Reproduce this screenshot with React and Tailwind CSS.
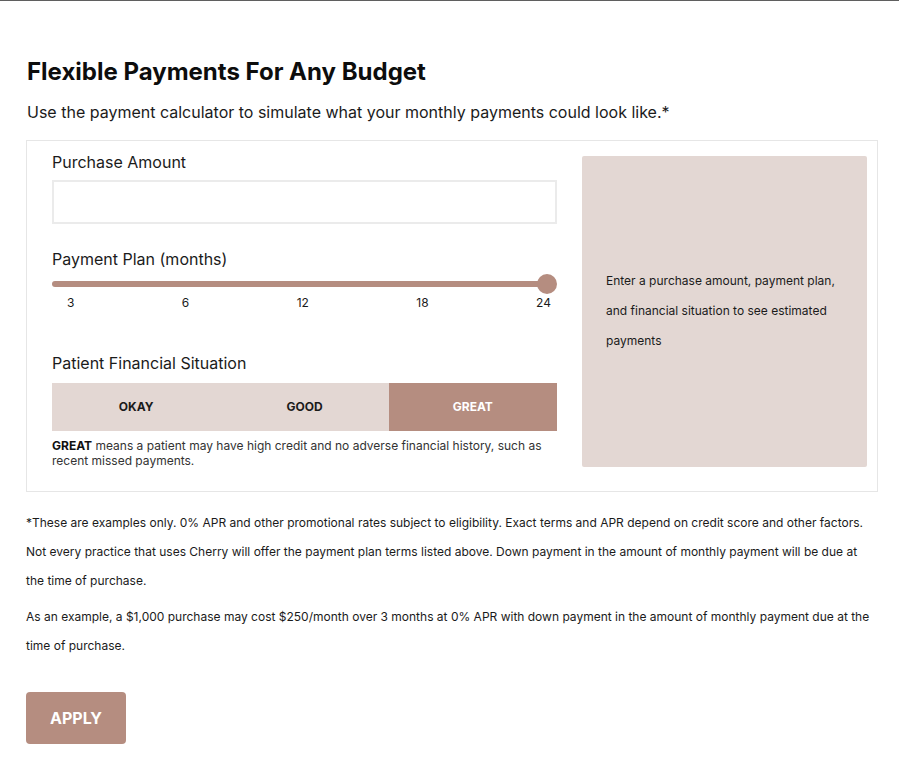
import { useState } from 'react';

const months = [3, 6, 12, 18, 24];
const situations = ['OKAY', 'GOOD', 'GREAT'];

export default function App() {
  const [situation, setSituation] = useState('GREAT');

  return (
    <div className="min-h-[780px] bg-white border-t border-[#5f5f5f] font-['Inter',sans-serif] text-[#1b1b1b]">
      <div className="ml-[26px] w-[852px] pt-[58px] pb-[36px]">
        {/* Header */}
        <h1 className="text-[24px] leading-[26px] font-bold text-[#0d0d0d] ml-px">
          Flexible Payments For Any Budget
        </h1>
        <p className="mt-[15px] text-[16px] leading-[24px] ml-px">
          Use the payment calculator to simulate what your monthly payments could look like.*
        </p>

        {/* Calculator card */}
        <div className="mt-[16px] border border-[#e6e6e6] flex pl-[25px] pr-[10px] pt-[15px] pb-[23px]">
          <div className="w-[505px]">
            <label className="block text-[16px] leading-[20px] -mt-[4px]">Purchase Amount</label>
            <input
              type="text"
              className="mt-[8px] block w-full h-[44px] border-2 border-[#ebebeb] outline-none px-3 text-[16px]"
            />

            <p className="mt-[25px] text-[16px] leading-[20px]">Payment Plan (months)</p>
            <div className="mt-[5px] flex items-center h-[20px]">
              <div className="w-[498px] h-[6px] rounded-full bg-[#b58d80]" />
              <div className="-ml-[10px] w-[20px] h-[20px] rounded-full bg-[#b58d80]" />
            </div>
            <div className="flex justify-between pl-[15px] pr-[6px] text-[12px] leading-[14px] mt-[2px]">
              {months.map((m) => (
                <span key={m}>{m}</span>
              ))}
            </div>

            <p className="mt-[43px] text-[16px] leading-[20px]">Patient Financial Situation</p>
            <div className="mt-[10px] grid grid-cols-3 h-[48px]">
              {situations.map((s) => (
                <button
                  key={s}
                  onClick={() => setSituation(s)}
                  className={`text-[12px] font-bold ${
                    s === situation ? 'bg-[#b58d80] text-white' : 'bg-[#e3d7d3] text-[#1b1b1b]'
                  }`}
                >
                  {s}
                </button>
              ))}
            </div>
            <p className="mt-[7px] text-[12px] leading-[15px] text-[#333]">
              <span className="font-bold text-[#111]">GREAT</span> means a patient may have high credit and no adverse financial history, such as recent missed payments.
            </p>
          </div>

          <div className="ml-[25px] w-[285px] h-[311px] bg-[#e3d7d3] rounded-[2px] flex items-center px-[24px]">
            <p className="text-[12px] leading-[30px] text-[#1b1b1b] -mt-[2px]">
              Enter a purchase amount, payment plan, and financial situation to see estimated payments
            </p>
          </div>
        </div>

        {/* Footnotes */}
        <div className="mt-[16px] text-[12px] leading-[29px] text-[#1b1b1b]">
          <p>
            *These are examples only. 0% APR and other promotional rates subject to eligibility. Exact terms and APR depend on credit score and other factors. Not every practice that uses Cherry will offer the payment plan terms listed above. Down payment in the amount of monthly payment will be due at the time of purchase.
          </p>
          <p className="mt-[7px]">
            As an example, a $1,000 purchase may cost $250/month over 3 months at 0% APR with down payment in the amount of monthly payment due at the time of purchase.
          </p>
        </div>

        <button className="mt-[32px] w-[100px] h-[52px] rounded-[4px] bg-[#b58d80] text-white text-[16px] font-bold">
          APPLY
        </button>
      </div>
    </div>
  );
}
